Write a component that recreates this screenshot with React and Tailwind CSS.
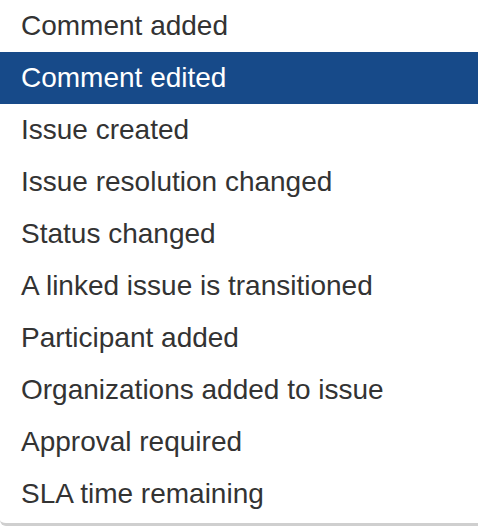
const ITEMS = [
  'Comment added',
  'Comment edited',
  'Issue created',
  'Issue resolution changed',
  'Status changed',
  'A linked issue is transitioned',
  'Participant added',
  'Organizations added to issue',
  'Approval required',
  'SLA time remaining',
]

export default function App() {
  return (
    <div className="w-[478px] h-[526px] bg-white overflow-hidden" style={{ fontFamily: '"Liberation Sans", Arial, sans-serif' }}>
      <ul className="bg-white rounded-bl-[6px] border-b-[3px] border-[#cfcfcf] pb-[3px]">
        {ITEMS.map((label, i) => (
          <li
            key={label}
            className={`h-[52px] flex items-center pl-[21px] text-[28px] leading-none ${i === 1 ? 'bg-[#174a89] text-white' : 'text-[#333333]'}`}
          >
            {label}
          </li>
        ))}
      </ul>
    </div>
  )
}
